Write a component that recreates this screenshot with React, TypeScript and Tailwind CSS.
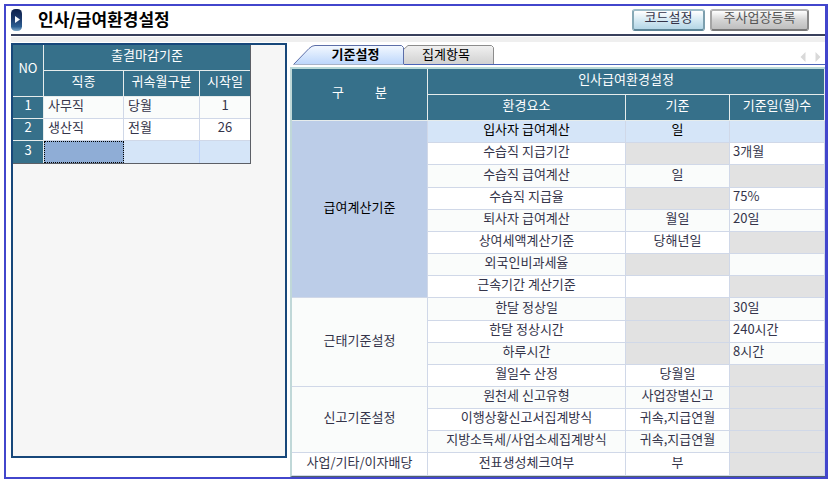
import { useState } from "react";
import type { ReactNode } from "react";

type Value = string | null;

interface SettingRow {
  name: string;
  base: Value;
  days: Value;
  tall?: boolean;
}

interface SettingGroup {
  title: string;
  rows: SettingRow[];
}

// A null value is a cell that the setting does not use; it is shown greyed out.
const GROUPS: SettingGroup[] = [
  {
    title: "급여계산기준",
    rows: [
      { name: "입사자 급여계산", base: "일", days: "" },
      { name: "수습직 지급기간", base: null, days: "3개월" },
      { name: "수습직 급여계산", base: "일", days: null, tall: true },
      { name: "수습직 지급율", base: null, days: "75%" },
      { name: "퇴사자 급여계산", base: "월일", days: "20일" },
      { name: "상여세액계산기준", base: "당해년일", days: null },
      { name: "외국인비과세율", base: null, days: "" },
      { name: "근속기간 계산기준", base: "", days: null },
    ],
  },
  {
    title: "근태기준설정",
    rows: [
      { name: "한달 정상일", base: null, days: "30일", tall: true },
      { name: "한달 정상시간", base: null, days: "240시간" },
      { name: "하루시간", base: null, days: "8시간" },
      { name: "월일수 산정", base: "당월일", days: null },
    ],
  },
  {
    title: "신고기준설정",
    rows: [
      { name: "원천세 신고유형", base: "사업장별신고", days: null },
      { name: "이행상황신고서집계방식", base: "귀속,지급연월", days: null },
      { name: "지방소득세/사업소세집계방식", base: "귀속,지급연월", days: null },
    ],
  },
  {
    title: "사업/기타/이자배당",
    rows: [{ name: "전표생성체크여부", base: "부", days: null, tall: true }],
  },
];

const CLOSING = [
  { job: "사무직", month: "당월", start: "1" },
  { job: "생산직", month: "전월", start: "26" },
];

function HeadCell({
  children,
  className = "h-[26px] border-r border-b",
  colSpan,
  rowSpan,
}: {
  children: ReactNode;
  className?: string;
  colSpan?: number;
  rowSpan?: number;
}) {
  return (
    <th
      colSpan={colSpan}
      rowSpan={rowSpan}
      className={`border-[#e6ecec] bg-[#36708a] p-0 pb-1.5 text-center align-middle font-normal text-white ${className}`}
    >
      {children}
    </th>
  );
}

function TitleIcon() {
  return (
    <svg width="11" height="22" viewBox="0 0 11 22" aria-hidden="true">
      <defs>
        <linearGradient id="pill" x1="0" y1="0" x2="0" y2="1">
          <stop offset="0" stopColor="#0c1f4a" />
          <stop offset="0.45" stopColor="#1d3a6c" />
          <stop offset="0.8" stopColor="#2c5f92" />
          <stop offset="1" stopColor="#7fa9c8" />
        </linearGradient>
      </defs>
      <rect width="11" height="22" rx="4.5" fill="url(#pill)" />
      <path d="M4 7v7l5-3.5z" fill="#f4f8fc" />
    </svg>
  );
}

function ClosingTable() {
  return (
    <table className="w-[238px] table-fixed border-separate border-spacing-0 border-r border-b border-[#5c5f66]">
      <colgroup>
        <col className="w-[31px]" />
        <col className="w-[80px]" />
        <col className="w-[76px]" />
        <col />
      </colgroup>
      <thead>
        <tr>
          <HeadCell rowSpan={2}>NO</HeadCell>
          <HeadCell colSpan={3} className="h-[26px] border-b">
            출결마감기준
          </HeadCell>
        </tr>
        <tr>
          <HeadCell>직종</HeadCell>
          <HeadCell>귀속월구분</HeadCell>
          <HeadCell className="h-[26px] border-b">시작일</HeadCell>
        </tr>
      </thead>
      <tbody>
        {CLOSING.map((row, i) => (
          <tr key={row.job} className={i === 0 ? "bg-[#fafcfb]" : "bg-white"}>
            <HeadCell className="h-[22px] border-r border-b">{i + 1}</HeadCell>
            <td className="h-[22px] border-r border-b border-[#d0d8e8] p-0 pb-1.5 pl-1">{row.job}</td>
            <td className="border-r border-b border-[#d0d8e8] p-0 pb-1.5 pl-1">{row.month}</td>
            <td className="border-b border-[#d0d8e8] p-0 pb-1.5 text-center">{row.start}</td>
          </tr>
        ))}
        <tr className="bg-[#d5e5f8]">
          <HeadCell className="h-[22px] border-r">3</HeadCell>
          <td className="h-[22px] border border-dotted border-black bg-[#8fadd6] p-0" />
          <td className="border-r border-[#bdd3fa] p-0" />
          <td className="p-0" />
        </tr>
      </tbody>
    </table>
  );
}

function cellTone(value: Value, row: number) {
  if (value === null) return "bg-[#e2e2e2]";
  if (row === 0) return "bg-[#d5e5f8]";
  return row % 2 === 0 ? "bg-[#fafcfb]" : "bg-white";
}

function SettingsTable() {
  let index = -1;
  return (
    <table className="w-full table-fixed border-separate border-spacing-0 border-t-2 border-b border-l-2 border-t-[#b9d9d8] border-b-[#50606c] border-l-[#c0d8d8]">
      <colgroup>
        <col className="w-[136px]" />
        <col />
        <col className="w-[104px]" />
        <col className="w-[95px]" />
      </colgroup>
      <thead>
        <tr>
          <HeadCell rowSpan={2}>
            <span className="mr-7">구</span> <span>분</span>
          </HeadCell>
          <HeadCell colSpan={3}>인사급여환경설정</HeadCell>
        </tr>
        <tr>
          <HeadCell>환경요소</HeadCell>
          <HeadCell>기준</HeadCell>
          <HeadCell>기준일(월)수</HeadCell>
        </tr>
      </thead>
      <tbody>
        {GROUPS.map((group, g) =>
          group.rows.map((row, r) => {
            index += 1;
            const ink = index === 0 ? "text-black" : "";
            return (
              <tr key={row.name} className={ink}>
                {r === 0 && (
                  <th
                    scope="rowgroup"
                    rowSpan={group.rows.length}
                    className={`border-r border-b border-[#d0d8e8] p-0 pb-1.5 text-center align-middle font-normal ${
                      g === 0 ? "bg-[#bccde8]" : g === 3 ? "bg-white" : "bg-[#fafcfb]"
                    }`}
                  >
                    {group.title}
                  </th>
                )}
                <td
                  className={`border-r border-b border-[#d0d8e8] p-0 pb-1.5 text-center ${
                    row.tall ? "h-[23px]" : "h-[22px]"
                  } ${cellTone(row.name, index)}`}
                >
                  {row.name}
                </td>
                <td
                  className={`border-r border-b border-[#d0d8e8] p-0 pb-1.5 text-center ${cellTone(row.base, index)}`}
                >
                  {row.base}
                </td>
                <td
                  className={`border-r border-b border-[#d0d8e8] p-0 pb-1.5 pl-[3px] ${cellTone(row.days, index)}`}
                >
                  {row.days}
                </td>
              </tr>
            );
          }),
        )}
      </tbody>
    </table>
  );
}

function Tabs() {
  const [tab, setTab] = useState(0);
  return (
    <div className="flex h-5 items-stretch pl-[3px]" role="tablist">
      <button
        type="button"
        role="tab"
        aria-selected={tab === 0}
        onClick={() => setTab(0)}
        className="relative w-[111px] pb-1 pl-[14px] font-bold text-black"
      >
        <svg className="absolute inset-0" width="111" height="20" viewBox="0 0 111 20" aria-hidden="true">
          <defs>
            <linearGradient id="tabOn" x1="0" y1="0" x2="0" y2="1">
              <stop offset="0" stopColor="#f4f9ff" />
              <stop offset="1" stopColor="#bcd6fb" />
            </linearGradient>
          </defs>
          <path d="M0.5 19.5L16 3.5Q19 0.5 22 0.5H108.5L110.5 2.5V19.5" fill="url(#tabOn)" stroke="#5c6ea8" />
          <path d="M0 19.5H111" stroke="#a9b4c8" />
        </svg>
        <span className="relative">기준설정</span>
      </button>
      <button
        type="button"
        role="tab"
        aria-selected={tab === 1}
        onClick={() => setTab(1)}
        className="relative w-[90px] pr-[6px] pb-1 text-black"
      >
        <svg className="absolute inset-0" width="90" height="20" viewBox="0 0 90 20" aria-hidden="true">
          <defs>
            <linearGradient id="tabOff" x1="0" y1="0" x2="0" y2="1">
              <stop offset="0" stopColor="#f1f1f1" />
              <stop offset="1" stopColor="#d0d0d0" />
            </linearGradient>
          </defs>
          <path d="M-0.5 19.5V4.5L4 0.5H87.5L89.5 2.5V19.5" fill="url(#tabOff)" stroke="#8c8c8c" />
          <path d="M0 19.5H90" stroke="#4a64b8" />
        </svg>
        <span className="relative">집계항목</span>
      </button>
      <div className="flex flex-1 items-end justify-end gap-[9px] border-b border-[#4a64b8] pr-1 pb-[2px]">
        <button type="button" aria-label="이전">
          <svg width="6" height="10" viewBox="0 0 6 10" className="block" aria-hidden="true">
            <path d="M5.5 0v10L0.5 5z" fill="#d9d9d9" />
          </svg>
        </button>
        <button type="button" aria-label="다음">
          <svg width="6" height="10" viewBox="0 0 6 10" className="block" aria-hidden="true">
            <path d="M0.5 0v10l5-5z" fill="#d9d9d9" />
          </svg>
        </button>
      </div>
    </div>
  );
}

export default function App() {
  return (
    <div className="bg-white pt-1 pr-[3px] pb-[2px] pl-1 font-['Noto_Sans_CJK_KR',sans-serif] text-[13px] leading-[15px] text-[#34344a]">
      <main className="border-2 border-r-[3px] border-[#4246cc] pl-[5px]">
        <header className="flex h-[30px] items-center border-b-2 border-[#38405c] pr-4">
          <TitleIcon />
          <h1 className="ml-4 flex-1 pb-[2px] text-[17px] leading-6 font-bold text-black">
            인사/급여환경설정
          </h1>
          <div className="flex gap-[5px]">
            <button
              type="button"
              className="h-[22px] w-[73px] rounded-[3px] border-2 border-t-[#9dbcc8] border-r-[#7c9fae] border-b-[#5c8496] border-l-[#86a9b6] bg-linear-to-b from-white via-[#d6eaf3] to-[#b4d6e6] pb-1.5 leading-3"
            >
              코드설정
            </button>
            <button
              type="button"
              className="h-[22px] w-[99px] rounded-[3px] border-2 border-t-[#b2b2b2] border-r-[#8a8a8a] border-b-[#777777] border-l-[#a5a5a5] bg-linear-to-b from-white via-[#d4d4d4] to-[#bebebe] pb-1.5 leading-3 text-[#555555]"
            >
              주사업장등록
            </button>
          </div>
        </header>
        <div className="mt-px mb-px h-[5px] bg-[#efefef]" />
        <div className="flex gap-[3px]">
          <section
            aria-label="출결마감기준"
            className="mb-[19px] w-[276px] shrink-0 border-2 border-[#17477a] bg-[#f6f6f6]"
          >
            <ClosingTable />
          </section>
          <section aria-label="인사급여환경설정" className="flex min-w-0 flex-1 flex-col gap-[2px] pt-[2px]">
            <Tabs />
            <SettingsTable />
          </section>
        </div>
      </main>
    </div>
  );
}
